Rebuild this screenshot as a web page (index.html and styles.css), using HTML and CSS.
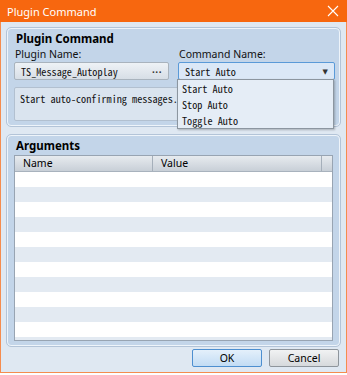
FILE: index.html
```html
<!DOCTYPE html>
<html lang="en">

<head>
  <meta charset="UTF-8">
  <meta name="viewport" content="width=device-width, initial-scale=1.0">
  <title>Plugin Command</title>
  <link rel="stylesheet" href="styles.css">
</head>

<body>

  <div class="window">
    <div class="titlebar">
      <span class="title">Plugin Command</span>
      <svg class="close" width="12" height="12" viewBox="0 0 12 12">
        <path d="M1 1 L11 11 M11 1 L1 11" stroke="#fff" stroke-width="1.1" fill="none" />
      </svg>
    </div>

    <div class="content">
      <div class="group" id="commandGroup">
        <div class="groupTitle">Plugin Command</div>
        <div class="fields">
          <div class="field">
            <label>Plugin Name:</label>
            <div class="inputBox plugin">
              <span class="mono">TS_Message_Autoplay</span>
              <span class="dots">...</span>
            </div>
          </div>
          <div class="field">
            <label>Command Name:</label>
            <div class="inputBox select">
              <span class="mono">Start Auto</span>
              <span class="arrow">▼</span>
            </div>
          </div>
        </div>
        <div class="description mono">Start auto-confirming messages.</div>

        <!-- open dropdown list -->
        <ul class="dropdown mono">
          <li>Start Auto</li>
          <li>Stop Auto</li>
          <li>Toggle Auto</li>
        </ul>
      </div>

      <div class="group" id="argsGroup">
        <div class="groupTitle">Arguments</div>
        <div class="table">
          <div class="header">
            <div class="col name">Name</div>
            <div class="col value">Value</div>
            <div class="col spare"></div>
          </div>
          <div class="rows" id="rows"></div>
        </div>
      </div>

      <div class="buttons">
        <button class="ok">OK</button>
        <button>Cancel</button>
      </div>
    </div>
  </div>

  <script>
    // empty argument rows
    var rows = document.getElementById('rows');
    for (var i = 0; i < 12; i++) {
      var row = document.createElement('div');
      row.className = 'row';
      rows.appendChild(row);
    }
  </script>

</body>

</html>
```

FILE: styles.css
```css
body {
  margin: 0;
  background-color: #fff;
  font-family: "Noto Sans", "DejaVu Sans", sans-serif;
  color: #000;
}

.window {
  width: 347px;
  height: 373px;
  box-sizing: border-box;
  border: 1px solid #f58c4e;
  border-top: none;
  display: flex;
  flex-direction: column;
  background-color: #dfe8f2;
}

.titlebar {
  height: 22px;
  margin: 0 -1px;
  background-color: #f7670f;
  display: flex;
  align-items: center;
  justify-content: space-between;
  padding: 0 7px;
  color: #fff;
}

.title {
  font-size: 11px;
}

.close {
  margin-right: 1px;
}

.mono {
  font-family: "Noto Sans Mono CJK JP", "Liberation Mono", monospace;
  font-size: 10.2px;
  color: #111;
}

.content {
  flex: 1;
  padding: 6px 6px 0 6px;
  display: flex;
  flex-direction: column;
}

.group {
  position: relative;
  background-color: #c3d5e9;
  border: 1px solid #eef4fa;
  outline: 1px solid #b3c4d8;
  border-radius: 4px;
  padding: 2px 6px 0 6px;
}

#commandGroup {
  height: 94px;
}

#argsGroup {
  margin-top: 9px;
  height: 207px;
}

.groupTitle {
  font-size: 11.5px;
  font-weight: bold;
  height: 16px;
  line-height: 16px;
  padding-left: 2px;
}

.fields {
  display: flex;
  gap: 9px;
}

.field {
  display: flex;
  flex-direction: column;
}

.field label {
  font-size: 10.5px;
  height: 15px;
  line-height: 15px;
  padding-left: 1px;
  color: #111;
}

.inputBox {
  height: 18px;
  box-sizing: border-box;
  border: 1px solid #a9b3bd;
  border-radius: 2px;
  display: flex;
  align-items: center;
  justify-content: space-between;
  padding: 0 6px;
}

.plugin {
  width: 155px;
  background: linear-gradient(#eef2f6, #d7dee6);
}

.dots {
  font-size: 10px;
  font-weight: bold;
  letter-spacing: 0.5px;
  line-height: 10px;
  padding-bottom: 4px;
  color: #333;
}

.select {
  width: 157px;
  background-color: #dbe8f7;
  border: 1px solid #5a9ad8;
}

.arrow {
  font-size: 7px;
  color: #333;
}

.description {
  margin-top: 7px;
  height: 34px;
  box-sizing: border-box;
  border: 1px solid #b2c0d0;
  border-radius: 2px;
  background-color: #dae4ef;
  padding: 3px 5px;
}

.dropdown {
  position: absolute;
  left: 169px;
  top: 50px;
  width: 157px;
  height: 50px;
  box-sizing: border-box;
  margin: 0;
  padding: 1px 0 0 0;
  list-style: none;
  background-color: #e5edf6;
  border: 1px solid #8c96a0;
  box-shadow: 1px 1px 2px rgba(0, 0, 0, 0.25);
}

.dropdown li {
  height: 16px;
  line-height: 16px;
  padding-left: 4px;
}

.table {
  margin-top: 1px;
  border: 1px solid #98a4b2;
  background-color: #fff;
  height: 186px;
  box-sizing: border-box;
  overflow: hidden;
}

.header {
  display: flex;
  height: 15px;
  background: linear-gradient(#e7ebef, #c8cfd7);
  border-bottom: 1px solid #a8b2bd;
}

.col {
  font-size: 10.5px;
  line-height: 15px;
  padding-left: 8px;
  border-right: 1px solid #a5afba;
  box-sizing: border-box;
}

.name {
  width: 138px;
}

.value {
  width: 169px;
}

.spare {
  flex: 1;
  border-right: none;
}

.row {
  height: 15px;
}

.row:nth-child(even) {
  background-color: #e3eaf2;
}

.buttons {
  display: flex;
  justify-content: flex-end;
  gap: 7px;
  margin-top: 3px;
  padding-right: 1px;
}

button {
  width: 70px;
  height: 18px;
  box-sizing: border-box;
  border: 1px solid #8e959c;
  border-radius: 2px;
  background: linear-gradient(#f1f2f3, #d6d9dc);
  font-family: "Noto Sans", "DejaVu Sans", sans-serif;
  font-size: 10.5px;
  padding: 0;
  color: #000;
}

button.ok {
  border: 1px solid #4d8fd0;
  background: linear-gradient(#e4f0fb, #c2dcf4);
}
```
